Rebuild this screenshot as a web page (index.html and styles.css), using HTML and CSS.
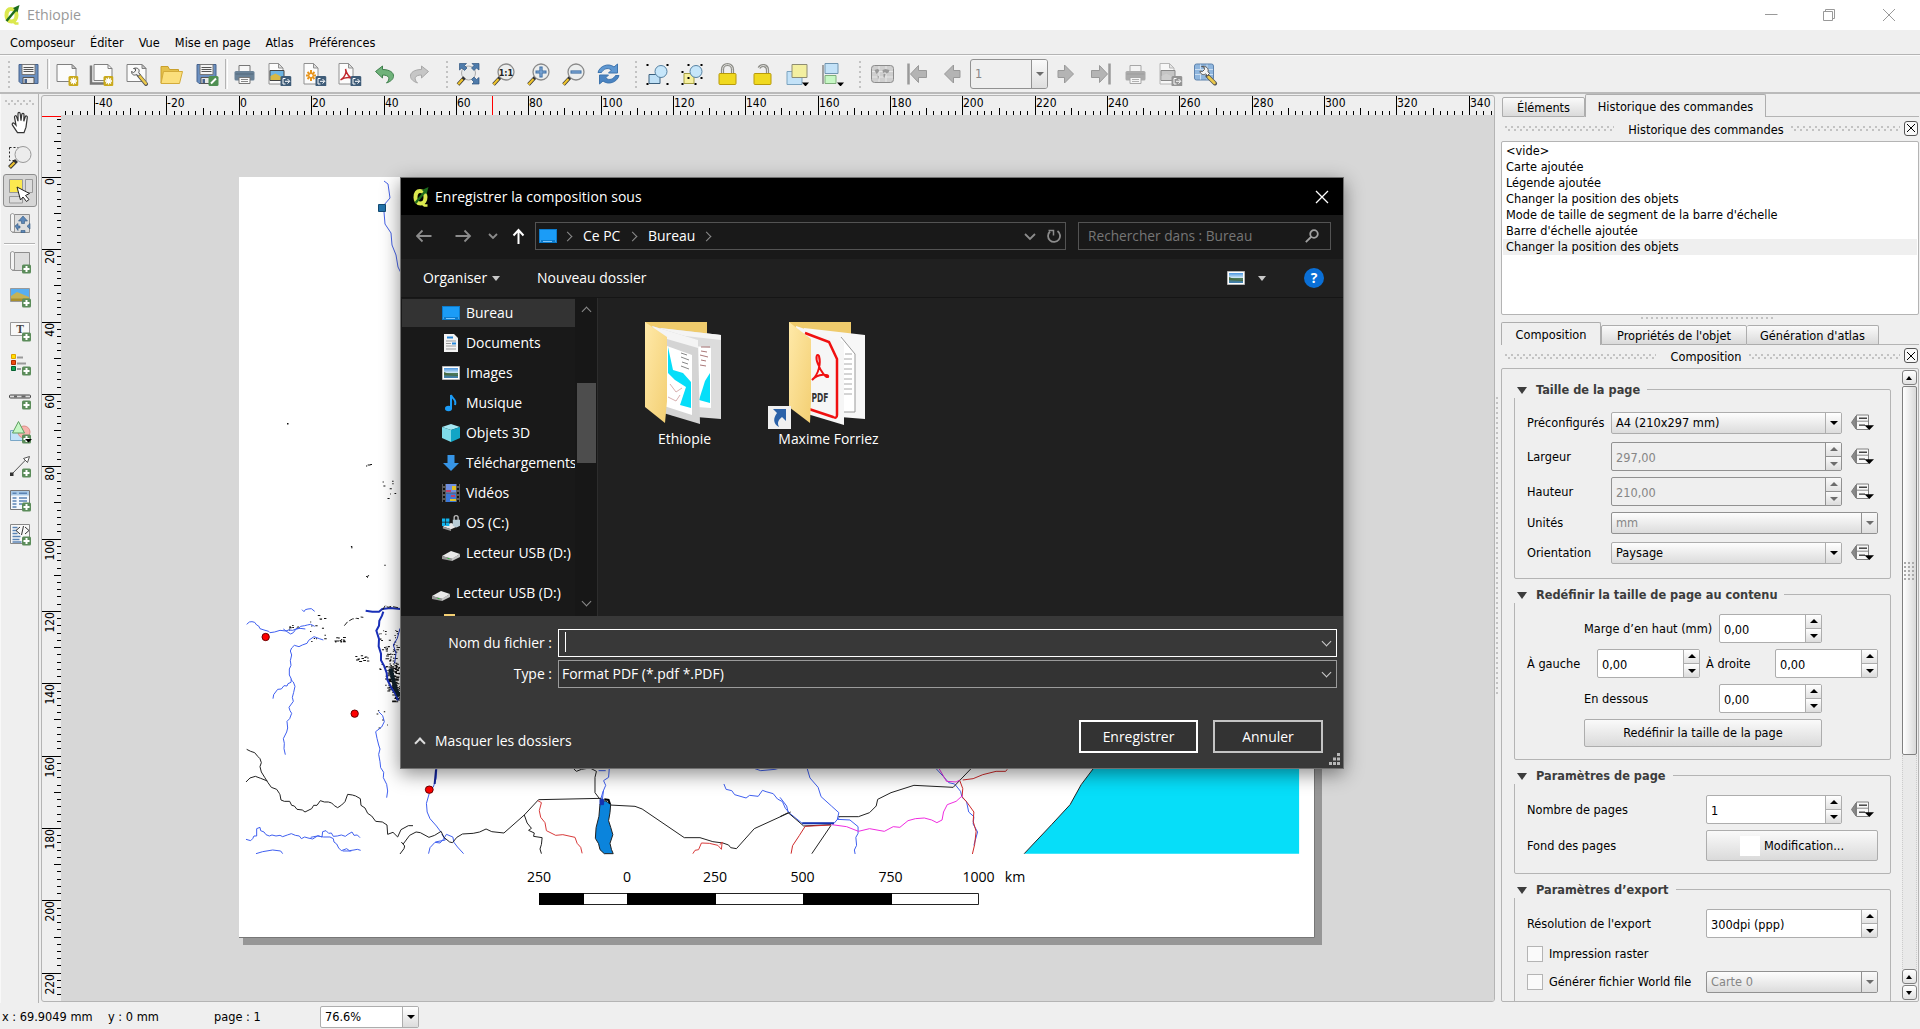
FILE: index.html
```html
<!DOCTYPE html>
<html lang="fr">
<head>
<meta charset="utf-8">
<title>Ethiopie</title>
<link rel="stylesheet" href="styles.css">
</head>
<body>
<svg class="defs" width="0" height="0">
  <defs>
    <linearGradient id="gold" x1="0" y1="0" x2="1" y2="1"><stop offset="0" stop-color="#ffe9a8"/><stop offset="1" stop-color="#f3cf73"/></linearGradient>
    <linearGradient id="sky" x1="0" y1="0" x2="0" y2="1"><stop offset="0" stop-color="#4a96e0"/><stop offset=".5" stop-color="#d8ecf8"/><stop offset=".55" stop-color="#4d7a58"/><stop offset="1" stop-color="#3f7fb8"/></linearGradient>
    <symbol id="i-disk" viewBox="0 0 24 24"><path d="M2.500 2.500h19v19h-17l-2-2z" fill="#6a8fc0" stroke="#46628c"/><path d="M5.500 2.500h13v10h-13z" fill="#f4f4f4" stroke="#777"/><path d="M7 5.500h10M7 7.500h10M7 9.500h10" stroke="#555"/><path d="M6.500 15.500h11v6h-11z" fill="#e8e8e8" stroke="#555"/><path d="M8 17h2.500v4H8z" fill="#46628c"/></symbol>
    <symbol id="i-page" viewBox="0 0 24 24"><path d="M2.500 2.500h15l4 4v13h-19z" fill="#fbfbfb" stroke="#808080"/><path d="M17.500 2.500v4h4z" fill="#ccc" stroke="#808080"/></symbol>
    <symbol id="b-star" viewBox="0 0 24 24"><rect x="14" y="14" width="10" height="10" rx="1.500" fill="#c9a91c"/><path d="M19 15.500v7M15.500 19h7M16.500 16.500l5 5M21.500 16.500l-5 5" stroke="#fff" stroke-width="1.300"/></symbol>
    <symbol id="b-exp" viewBox="0 0 24 24"><rect x="13" y="14" width="11" height="10.500" rx="1.500" fill="#3f5c78"/><path d="M18 16.500h-2.500v5.500H18M17.500 19.300h4.500M20 17l2.300 2.300L20 21.600" stroke="#fff" fill="none"/></symbol>
    <symbol id="b-plus" viewBox="0 0 24 24"><rect x="14" y="14.500" width="9" height="9" rx="1.500" fill="#5b8c5a"/><path d="M18.500 16v6M15.500 19h6" stroke="#fff" stroke-width="2"/></symbol>
    <symbol id="i-new" viewBox="0 0 24 24"><use href="#i-page"/><use href="#b-star"/></symbol>
    <symbol id="i-dup" viewBox="0 0 24 24"><path d="M1.500 3.500v18h18" fill="none" stroke="#777" stroke-width="2.500"/><path d="M4.500 2.500h14l4 4v12h-18z" fill="#fbfbfb" stroke="#808080"/><path d="M18.500 2.500v4h4" fill="none" stroke="#808080"/><use href="#b-star"/></symbol>
    <symbol id="i-wrench" viewBox="0 0 24 24"><use href="#i-page"/><path d="M14 13l7.500 9" stroke="#555" stroke-width="4" stroke-linecap="round"/><path d="M15 14l6.300 7.500" stroke="#ecc94a" stroke-width="2.500" stroke-linecap="round"/><path d="M9 6.500l2 .5v2l-2 1.500-2-1c0 3 2.500 4.500 5 3l2 1.500 1.500-1.500-1.300-2c1.500-3-1-5.500-5.200-4z" fill="#f2f2f2" stroke="#555"/></symbol>
    <symbol id="i-open" viewBox="0 0 24 24"><path d="M1.500 21V4.500h7l1.500 3h9v3.500" fill="#e5c14b" stroke="#c9a02c"/><path d="M1.500 21.500l2.500-12h19l-3 12z" fill="#fbdf7c" stroke="#d3ab3a"/></symbol>
    <symbol id="i-diskedit" viewBox="0 0 24 24"><use href="#i-disk"/><rect x="14" y="14" width="10" height="10" rx="1.500" fill="#4f8f52"/><path d="M16.500 21.500l5-5" stroke="#fff" stroke-width="2"/></symbol>
    <symbol id="i-print" viewBox="0 0 24 24"><path d="M6.500 3.500h11v7h-11z" fill="#f6f6f6" stroke="#777"/><rect x="2" y="9" width="20" height="9.500" rx="1.500" fill="#6a8297"/><path d="M3 12h18" stroke="#52687c"/><path d="M6.500 15.500h11v6h-11z" fill="#fafafa" stroke="#777"/><path d="M8.500 17.500h7M8.500 19.500h7" stroke="#888"/></symbol>
    <symbol id="i-doc" viewBox="0 0 24 24"><path d="M1.500 1.500h9.500l4.500 4.500v16h-14z" fill="#fcfcfc" stroke="#909090"/><path d="M11 1.500v4.500h4.500z" fill="#ddd" stroke="#909090"/></symbol>
    <symbol id="i-eimg" viewBox="0 0 24 24"><use href="#i-doc"/><path d="M2.500 8.500h14v10h-14z" fill="#6db4e2" stroke="#444"/><path d="M3 14l5-2.500 8 4.500v2H3z" fill="#d8b945"/><use href="#b-exp"/></symbol>
    <symbol id="i-esvg" viewBox="0 0 24 24"><use href="#i-doc"/><path d="M8.500 8v11M3.500 13.500h10M5 10l7 7M12 10l-7 7" stroke="#e8951d" stroke-width="2"/><circle cx="8.500" cy="13.500" r="1.500" fill="#fff"/><use href="#b-exp"/></symbol>
    <symbol id="i-epdf" viewBox="0 0 24 24"><use href="#i-doc"/><path d="M3 18c5-3 6-8 5-11 1 4 2 7 6 9-4-1-8 0-11 2z" fill="none" stroke="#c1272d" stroke-width="1.400"/><use href="#b-exp"/></symbol>
    <symbol id="i-undo" viewBox="0 0 24 24"><path d="M3 9.500L10 4v3.500c7 0 11.500 3 11 7-.3 3-3 5-7 6.500 4-4 3-8-4-8V16z" fill="#6fb27a" stroke="#3f7f4c"/></symbol>
    <symbol id="i-redo" viewBox="0 0 24 24"><path d="M21 9.500L14 4v3.500c-7 0-11.500 3-11 7 .3 3 3 5 7 6.500-4-4-3-8 4-8V16z" fill="#c6c6c6" stroke="#a8a8a8"/></symbol>
    <symbol id="i-full" viewBox="0 0 24 24"><circle cx="12" cy="11" r="7" fill="#e8eaea" stroke="#aaa"/><path d="M1.500 22.500l6.500-7" stroke="#333" stroke-width="3.500"/><path d="M1.700 22.300l4.500-5" stroke="#eec32e" stroke-width="2.200"/><path d="M3 1.500h7L8 3.500l2.500 2.500L8 8.500 5.500 6l-2.500 2zM22.500 1.500h-7l2 2-2.500 2.500L17.500 8.500 20 6l2.500 2zM22.500 22h-7l2-2-2.500-2.500 2.500-2.500 2.500 2.500 2.500-2z" fill="#4f7cab" stroke="#2f557f" stroke-width=".7"/></symbol>
    <symbol id="i-mag" viewBox="0 0 24 24"><path d="M2 22.500l7-7.500" stroke="#333" stroke-width="3.500"/><path d="M2 22.500l5-5.500" stroke="#eec32e" stroke-width="2.200"/><circle cx="14.500" cy="10" r="8" fill="#eceeee" stroke="#8a8a8a" stroke-width="1.300"/></symbol>
    <symbol id="i-m11" viewBox="0 0 24 24"><use href="#i-mag"/><text x="14.500" y="13.500" font-size="9" font-weight="bold" text-anchor="middle" fill="#222">1:1</text></symbol>
    <symbol id="i-mp" viewBox="0 0 24 24"><use href="#i-mag"/><path d="M14.500 4.500v11M9 10h11" stroke="#3f6ea3" stroke-width="3.200"/><path d="M14.500 5.500v9M10 10h9" stroke="#83addb" stroke-width="1.200"/></symbol>
    <symbol id="i-mm" viewBox="0 0 24 24"><use href="#i-mag"/><path d="M9 10h11" stroke="#3f6ea3" stroke-width="3.200"/><path d="M10 10h9" stroke="#83addb" stroke-width="1.200"/></symbol>
    <symbol id="i-refresh" viewBox="0 0 24 24"><path d="M1.500 10.500C3 4 12 .5 17.500 5L21 2v9h-9l3-3c-4-3-8-1-10 2.500z" fill="#5f98d2" stroke="#3e74ad"/><path d="M22.500 13.500C21 20 12 23.500 6.500 19L3 22v-9h9l-3 3c4 3 8 1 10-2.500z" fill="#4a84c2" stroke="#3e74ad"/></symbol>
    <symbol id="i-group" viewBox="0 0 24 24"><path d="M3.500 12.500h11v9h-11z" fill="#bfe0f6" stroke="#3c617e"/><circle cx="15.500" cy="9.500" r="6" fill="#c6e6fa" stroke="#5682a3"/><path d="M1 2h2v2H1zM21 2h2v2h-2zM1 21h2v2H1zM21 21h2v2h-2z"/></symbol>
    <symbol id="i-ungroup" viewBox="0 0 24 24"><path d="M3.500 11.500h10v10h-10z" fill="#f6f09e" stroke="#a39d43"/><circle cx="15.500" cy="9.500" r="6" fill="#c6e6fa" stroke="#5682a3"/><path d="M7 2h2v2H7zM20 2h2v2h-2zM20 15h2v2h-2zM7 15h2v2H7zM1 9h2v2H1zM1 21h2v2H1zM14 21h2v2h-2z"/></symbol>
    <symbol id="i-lock" viewBox="0 0 24 24"><path d="M7 12V7.500a5 5 0 0 1 10 0V12" fill="none" stroke="#8d8d88" stroke-width="3.200"/><path d="M7 12V7.500a5 5 0 0 1 10 0V12" fill="none" stroke="#dcdcd8"/><rect x="3.500" y="11.500" width="17" height="11" rx="1" fill="#f0d91f" stroke="#b89a0a"/></symbol>
    <symbol id="i-unlock" viewBox="0 0 24 24"><path d="M8.500 6C11 2 17 3 17 8v4" fill="none" stroke="#8d8d88" stroke-width="3.200"/><path d="M8.500 6C11 2 17 3 17 8v4" fill="none" stroke="#dcdcd8"/><rect x="3.500" y="11.500" width="17" height="11" rx="1" fill="#f0d91f" stroke="#b89a0a"/></symbol>
    <symbol id="b-tri" viewBox="0 0 24 24"><path d="M16.500 20.500h7l-3.500 4z"/></symbol>
    <symbol id="i-raise" viewBox="0 0 24 24"><path d="M1.500 9.500h15v13h-15z" fill="#c3e2f8" stroke="#7ba3bf"/><path d="M6.500 2.500h15v13h-15z" fill="#f3efa0" stroke="#8e8c72"/><use href="#b-tri"/></symbol>
    <symbol id="i-align" viewBox="0 0 24 24"><path d="M2.500 3v19" stroke="#555"/><path d="M4.500 1.500h13v10h-13z" fill="#c3e2f8" stroke="#7095b0"/><path d="M4.500 13.500h11v8h-11z" fill="#c6f7c4" stroke="#7fae7c"/><use href="#b-tri"/></symbol>
    <symbol id="i-atlas" viewBox="0 0 24 24"><rect x="1" y="3.500" width="22" height="17" rx="3" fill="#cfcfcf" stroke="#8c8c8c"/><path d="M8.500 4v16M15.500 4v16M1.500 9.500h21M1.500 15h21" stroke="#eee" opacity=".8"/><path d="M4 8l3-1 2 1-1 2-2 2-1-2zM7 13.500l1.500 1-1 3zM12 8l3-1 4 1-1 2.500-2 1-1.500-1.500-2 1zM13 12h2l-1 4-1-1z" fill="#999"/></symbol>
    <symbol id="i-first" viewBox="0 0 24 24"><path d="M3 1.500v21" stroke="#9a9a9a" stroke-width="2.500"/><path d="M5 12l8-8.500V8.500h8v7h-8v5z" fill="#b4b4b4" stroke="#999"/></symbol>
    <symbol id="i-prev" viewBox="0 0 24 24"><path d="M4 12l9-9v5.500h6.500v7H13V21z" fill="#b4b4b4" stroke="#999"/></symbol>
    <symbol id="i-setatlas" viewBox="0 0 24 24"><rect x="1" y="2" width="19" height="16" rx="2" fill="#8fb6de" stroke="#5f83ad"/><path d="M1.500 7.500h18M1.500 12.500h18M7 2.500v15M13.500 2.500v15" stroke="#dbe9f6" opacity=".8"/><path d="M14 14l7.500 7.500" stroke="#555" stroke-width="4" stroke-linecap="round"/><path d="M15 15l6 6" stroke="#ecc94a" stroke-width="2.500" stroke-linecap="round"/><path d="M8 4.500l2.500.5.500 2.500L9 9.500 6.500 9c0 3 3 4.500 5.500 3l2 1.500 2-2-1.500-2c1-3-2-6-6.500-5z" fill="#f4f4f4" stroke="#555"/></symbol>
    <symbol id="t-hand" viewBox="0 0 24 24"><path d="M8.500 22.500l-5-7.500c-1-2 .5-3 2-1.500l1.500 1.500-1.500-8c-.2-1.800 1.800-2 2.200-.3L9 11V3.500c0-1.800 2-1.800 2.200 0L12 10.500l.8-6.300c.2-1.500 2.200-1.300 2.200.2l-.2 6.600 1.500-4.500c.5-1.300 2.300-.8 2 .7L17 17l-2 5.500z" fill="#fff" stroke="#333" stroke-width="1.200" transform="translate(1 -.8)"/></symbol>
    <symbol id="t-zoom" viewBox="0 0 24 24"><path d="M1.500 2.500h9M1.500 2.500v13h6" fill="none" stroke="#222" stroke-dasharray="2 2"/><path d="M1.500 22.500l7-7" stroke="#333" stroke-width="4"/><path d="M2 22l4.500-4.500" stroke="#eec32e" stroke-width="2.200"/><circle cx="15" cy="9.500" r="8" fill="#ececec" stroke="#999"/></symbol>
    <symbol id="t-select" viewBox="0 0 26 26"><path d="M2.500 1.500h13v13h-13z" fill="#fce94f" stroke="#999"/><path d="M18.500 1.500h7v13h-7zM2.500 18.500h13v6.500h-13z" fill="#dcdcdc" stroke="#999"/><path d="M10 9l3.500 13 2.500-3 3.500 4.500 2.500-2-3.500-4 4-2z" fill="#fff" stroke="#222"/></symbol>
    <symbol id="t-map" viewBox="0 0 24 24"><path d="M4.500 2.500h17v18h-17z" fill="#dedede" stroke="#8e8e8e"/><path d="M2.500 2.500q2-2 4 0V20h-2.500q-2-1-1.500-3z" fill="#f3f3f3" stroke="#999"/></symbol>
    <symbol id="t-move" viewBox="0 0 24 24"><use href="#t-map"/><path d="M15 4l4.500 5h-3v2.500h-3V9h-3zM7 14l3-2.500V14h2v2h-2v2.500zM22 11.500v5.500l-3-2.700zM13 18.500h4v2h-4z" fill="#5c87b8" stroke="#34597f" stroke-width=".6"/></symbol>
    <symbol id="t-addmap" viewBox="0 0 24 24"><use href="#t-map"/><use href="#b-plus"/></symbol>
    <symbol id="t-img" viewBox="0 0 24 24"><path d="M2.500 4.500h19v13h-19z" fill="#58aef0" stroke="#999"/><path d="M3 12l6-4 12 5v4H3z" fill="#c5b255"/><path d="M3 14.500h18V17H3z" fill="#a88f30"/><use href="#b-plus"/></symbol>
    <symbol id="t-text" viewBox="0 0 24 24"><path d="M2.500 4.500h19v13h-19z" fill="#f8f8f8" stroke="#999"/><text class="serif" x="12" y="15" font-size="11.500" font-weight="bold" text-anchor="middle" fill="#444">T</text><use href="#b-plus"/></symbol>
    <symbol id="t-legend" viewBox="0 0 24 24"><path d="M3.500 2.500h4v4h-4z" fill="#ffe000" stroke="#e0a000"/><path d="M3.500 8.500h4v4h-4z" fill="#f04a10" stroke="#b02c00"/><path d="M3.500 14.500h4v4h-4z" fill="#10a050" stroke="#056030"/><path d="M9 5.500h6M9 11.500h9M9 17h4" stroke="#999" stroke-width="1.800"/><use href="#b-plus"/></symbol>
    <symbol id="t-scale" viewBox="0 0 24 24"><rect x="1.500" y="9" width="21" height="3" rx="1" fill="#ddd" stroke="#444"/><path d="M6 10.500h3M13.500 10.500h4" stroke="#666" stroke-width="2"/><use href="#b-plus"/></symbol>
    <symbol id="t-shape" viewBox="0 0 24 24"><path d="M2.500 10.500h12v10h-12z" fill="#c3e2f8" stroke="#7aa7c7"/><circle cx="16" cy="12" r="6" fill="#f7b3ae" stroke="#dd8c86"/><path d="M10.500 1.500l6 11.500h-12z" fill="#c6f7c4" stroke="#5e9f60"/><use href="#b-plus"/><path d="M17 19h7l-3.500 3.500z"/></symbol>
    <symbol id="t-arrow" viewBox="0 0 24 24"><path d="M3.500 20.500L19 4.500" stroke="#555"/><path d="M2 18.500h3.500V22H2z" fill="#333"/><path d="M21.500 2.500l-6 2 4 4z" fill="#fff" stroke="#555"/><use href="#b-plus"/></symbol>
    <symbol id="t-table" viewBox="0 0 24 24"><path d="M2.500 2.500h19v19h-19z" fill="#f4f8fc" stroke="#777"/><path d="M3 3h18v4.500H3z" fill="#a9c9e6"/><path d="M4.500 5.200h4M11 5.200h8M4.500 10h4M11 10h8M4.500 13h4M11 13h8M4.500 16h4M11 16h3M4.500 19h4" stroke="#5a83b4" stroke-width="1.400"/><use href="#b-plus"/></symbol>
    <symbol id="t-html" viewBox="0 0 24 24"><path d="M2.500 2.500h19v19h-19z" fill="#f8f8f8" stroke="#888"/><path d="M4.500 5.500h5M4.500 8.500h4M4.500 11.500h5M4.500 14.500h8M4.500 17.500h7M4.500 20h9" stroke="#5a83b4" stroke-width="1.600"/><path d="M12 5l-4 3.500 4 3.500M15.500 4l-2 9M17 5l4 3.500-4 3.500" fill="none" stroke="#333"/><use href="#b-plus"/></symbol>
    <symbol id="i-prop" viewBox="0 0 23 18"><path d="M5 2v13L.5 8.500z" fill="#8a8a8a" stroke="#777"/><path d="M5.500 1h12v14.500h-12z" fill="#f8f8f8" stroke="#808080"/><path d="M8 4.200h8" stroke="#444" stroke-width="1.500"/><path d="M6 7.200h11" stroke="#888"/><path d="M8 11.200h6" stroke="#333" stroke-width="1.300"/><path d="M13.500 11.300H23l-4.700 4.700z"/></symbol>
    <symbol id="q" viewBox="0 0 18 20"><path d="M7 4C3.500 4 2.500 7.500 2.500 10.500S4 16.500 7.500 16.500 12.500 13 12.500 10 11 4 7 4z" fill="none" stroke="#dbe84e" stroke-width="4"/><path d="M8 15.500l3.500 3h3" stroke="#dbe84e" stroke-width="2.500" fill="none"/><path d="M2.500 16L12.500 4" stroke="#1d6b1d" stroke-width="2.400"/><path d="M15.500 0l-2 7.500L9 3z" fill="#1d6b1d"/></symbol>
    <symbol id="d-desk" viewBox="0 0 18 14"><path d="M0 0h18v14H0z" fill="#0c7ccd"/><path d="M1 1h16v10H1z" fill="#1b9cf7"/><path d="M1 12h1M4 12.500h9M16 12h1" stroke="#7cc4fb"/></symbol>
    <symbol id="d-pic" viewBox="0 0 18 14"><path d="M.5.500h17v13H.5z" fill="#fff" stroke="#b5b5b5"/><path d="M2 2h14v10H2z" fill="url(#sky)"/><path d="M2 6l5 2 9 1v1L2 9z" fill="#4a6b43"/></symbol>
    <symbol id="d-usb" viewBox="0 0 18 11"><path d="M0 6L9 1l9 3-8 5z" fill="#e8e8e8"/><path d="M0 6l10 2.500V11L0 9z" fill="#999"/><path d="M10 8.500l8-4.500v3l-8 4z" fill="#c4c4c4"/><path d="M5.500 8.500h2" stroke="#2fbd3a"/></symbol>
  </defs>
</svg>

<header class="titlebar">
  <svg width="18" height="20"><use href="#q"/></svg><span>Ethiopie</span>
  <svg class="winctl" width="132" height="14" viewBox="0 0 132 14" fill="none" stroke="#999"><path d="M0 6.500h12.500M58.500 3.500h9v9h-9zM60.500 3.500v-2h9v9h-2M118 1l12 12M130 1l-12 12"/></svg>
</header>
<nav class="menubar"><span>Composeur</span><span>Éditer</span><span>Vue</span><span>Mise en page</span><span>Atlas</span><span>Préférences</span></nav>

<div class="toolbar">
  <i class="grip first"></i>
  <svg><use href="#i-disk"/></svg><i class="sep"></i>
  <svg><use href="#i-new"/></svg><svg><use href="#i-dup"/></svg><svg><use href="#i-wrench"/></svg><svg><use href="#i-open"/></svg><svg><use href="#i-diskedit"/></svg><i class="sep"></i>
  <svg><use href="#i-print"/></svg><svg><use href="#i-eimg"/></svg><svg><use href="#i-esvg"/></svg><svg><use href="#i-epdf"/></svg><svg><use href="#i-undo"/></svg><svg><use href="#i-redo"/></svg>
  <i class="grip"></i>
  <svg><use href="#i-full"/></svg><svg><use href="#i-m11"/></svg><svg><use href="#i-mp"/></svg><svg><use href="#i-mm"/></svg><svg><use href="#i-refresh"/></svg>
  <i class="grip"></i>
  <svg><use href="#i-group"/></svg><svg><use href="#i-ungroup"/></svg><svg><use href="#i-lock"/></svg><svg><use href="#i-unlock"/></svg><svg><use href="#i-raise"/></svg><svg><use href="#i-align"/></svg>
  <i class="grip"></i>
  <svg><use href="#i-atlas"/></svg><svg><use href="#i-first"/></svg><svg><use href="#i-prev"/></svg>
  <div class="field off atlasnum"><span>1</span><b class="dd"></b></div>
  <svg class="flip"><use href="#i-prev"/></svg><svg class="flip"><use href="#i-first"/></svg>
  <svg class="gray"><use href="#i-print"/></svg><svg class="gray"><use href="#i-eimg"/></svg><svg><use href="#i-setatlas"/></svg>
</div>

<main>
  <aside class="tools">
    <i class="dots"></i>
    <svg><use href="#t-hand"/></svg><svg><use href="#t-zoom"/></svg><div class="on"><svg><use href="#t-select"/></svg></div><svg><use href="#t-move"/></svg>
    <hr>
    <svg><use href="#t-addmap"/></svg><svg><use href="#t-img"/></svg><svg><use href="#t-text"/></svg><svg><use href="#t-legend"/></svg><svg><use href="#t-scale"/></svg><svg><use href="#t-shape"/></svg><svg><use href="#t-arrow"/></svg><svg><use href="#t-table"/></svg><svg><use href="#t-html"/></svg>
  </aside>

  <section class="composer">
    <svg class="ruler-h" id="rulerH" viewBox="42 96 1452 19"></svg>
    <svg class="ruler-v" id="rulerV" viewBox="42 115 19 886"></svg>
    <svg class="canvas" viewBox="61 115 1433 886" fill="none">
      <path d="M243 181h1079v764H243z" fill="#969696"/>
      <path d="M239 177h1075.500v760.500H239z" fill="#fff"/>
      <path d="M239 937.500h1075.500V177" stroke="#777"/>
      <g id="specks" fill="#111"></g>
      <path d="M384 181l4 3 2 14-6 7M384 212l1 12 6 9 1 12 4 10 2 12 3 6" stroke="#4763e8"/>
      <path d="M378.500 204.500h7v7h-7z" fill="#2273ab" stroke="#134a72"/>
      <g class="map" transform="translate(0 560) scale(.33333)">
        <g stroke="#4060f0">
          <path d="M740 193l8-7 8-1 8 2 6 8 6 3 4 8 12 4 14 4 4 4 14-2 16-5 18 2 8-3 12 1 10-4 8-2 6-6 12-2 8-2 10-2 12 6M850 207l14 10 8 5 8-4 8-11 12-2 16 2M906 149l6 6 4-6 8-2 10-1 10 8M970 240l-12-4-16-6-16 11-5 9-14 5-10 5-14-4-8 8-4 9 4 12-4 17 2 14-5 11v18l6 12-1 10-9 4-3 7-9-1-8 10-11 1-12 16-2 12M872 358l8 8 5 13-4 18-4 15 3 12-13 18 3 10 5 8-6 16-8 8 2 20-3 12-10 20 3 14-1 16 4 18"/>
          <path d="M1136 455l12 12 5 18-8 16-18 14 4 20 5 20 4 12-4 16 4 22 2 18 9 14-1 16 10 20 3 20-3 20"/>
          <path d="M738 838l14 4 6-6 4-8 8 0 0-22 10-4 2 10 10 4 6 8 10 4 8-3 12 3 12-2 8 4 14-5 12-4 12 5 12 2 6 8 10-5 10 3 14 3 16-10 12 4 2-16 10-3 8 8 8-1 6 10 12-1 12-3 12 4 8-6 12-7 6 10 10-1 8 8M932 832l20-4 18 3 20 0 10 5 2 10 8 6 6 12 8 8 16-6 8 6 14-2 10-2 10 3M1028 873h26M768 881l20-6 30-5 24 3 6 8"/>
        </g>
        <g stroke="#1a30b8" stroke-width="2"><path d="M1097 152l20 3 20 0 10-8 24-3 30 3M1150 155l-4 12-8 15-1 15-8 15 8 25-1 22 7 22v20l10 18 7 20 2 20 12 24 12 18 8 20"/></g>
        <path d="M1200 205l-8 30-12 20 8 25-4 30" stroke="#1a30b8"/>
        <g stroke="#222">
          <path d="M740 568l12 6 12 4 10 12 6 6 4 12-4 12 4 16 10 16 10 16 10 14 16 6 8 12 2 4 3 16 10 4 16 0 6 12 8 2 8 10 16 2 8 6 20-10 6-10 10 0 10-14 12 4 12 0 10 3 8 8 10 6 12-8 10-10 8-22 14 2 10 3 14 8 2 20 12 8 8 16 12 8 12 16 20 2 14 9 2 28 16-6 14 14 10-22 22-12 14 0M738 666l12-12 16-5 16 6 20 8M1204 846l10 12-2 8-12 16"/>
        </g>
        <path d="M1033 197l10-12 14-8 12-2 8 1M1082 171l8 1M1148 150l8-14 8 6 10-3 20 4" stroke="#222" stroke-dasharray="5 2"/>
        <path d="M1172 325l6 28 8 32 12 24" stroke="#10202a" stroke-width="4"/>
        <circle cx="797" cy="231" r="11" fill="#f00" stroke="#6a0000"/><circle cx="1064" cy="461" r="11" fill="#f00" stroke="#6a0000"/>
      </g>
      <g class="map" transform="translate(230 740) scale(.35714 .33333)">
        <path d="M579 86l-2 30-8 26M558 160l-8 30 2 26 8 20 18 22 14 20M556 341l4-18 14-16 14 2 10-12 8-14 18 8 3 16 10 14 17 20M593 282l10 18-28 6M1032 92h20M1046 150l-4 34M1062 86l-2 26-14 10 6 14-8 20-6 22M1470 86l16 6 40-4 14-4M1383 132l6 16 16 4 8 12 32 10 10-8 24 3 12-18 10 4 20 6 12 16 14 8 8 20 10 12" stroke="#4060f0"/>
        <path d="M577 88l-4 44" stroke="#15259a" stroke-width="2"/>
        <path d="M485 312l18-26 18-10 12 2 24 14 16-6 18-12 8 18 16 14 8 2 12-16 16-10 30-2 18-4 18-9 16 8 34 4L824 225l40-46 176-4M962 86l8 8 14-6 24-4 18 10-4 18v46l14 20M1062 195l72 4 20 8 118 86h44l36 12 28 4 16 6 6 8 16 3L1468 266l102-50M824 225l8 24 12 16-8 6 16 8-2 10 24 4-2 20-4 14 4 14" stroke="#222"/>
        <path d="M862 182l10 6-6 24 4 20 12 16 4 24 26 14 20-2 34 8 6 18 10 12 4 18M1296 341l6-10 10-2 8-20 22 1 24 6 10 12 2-22-6 8" stroke="#d83a3a"/>
        <path d="M1036 192l14-10 16 10-2 26-4 24 6 20 6 22-8 26 4 18 5 13h-25l-12-12-4-18-9-16 2-32 8-34z" fill="#0b84dc" stroke="#222"/>
        <path d="M1036 178h10v16h-10z" fill="#1533b0" stroke="#1533b0"/>
        <path d="M1048 178l12 2 4 12" stroke="#000" stroke-width="2"/>
        <circle cx="558" cy="149" r="11" fill="#f00" stroke="#6a0000"/>
      </g>
      <g class="map" transform="translate(780 600) scale(.37 .33333)">
        <path d="M848 504l-34 50-30 60-50 60-74 87h743V504z" fill="#06def9"/>
        <path d="M848 504l-34 50-30 60-50 60-74 87" stroke="#222"/>
        <path d="M73 504l8 30 22 28 8 28 28 28 20 20-4 20 34 2 22 20 0 20-6 12 2 24-6 14 2 12M0 592l18 26 4 18 38 34M422 506l20 24 14 18 16 4 16 22 4 18 12 12 6 32 14 14-2 22 12 24-10 40M60 670h86l14-18" stroke="#4060f0"/>
        <path d="M0 650l22-12 42 40 74-4M138 676l-52 85M158 650h54l30-12 18-20 4-20 36-20 62-22 106 6 50-58" stroke="#222"/>
        <path d="M30 761l4-24 18-30 16-28 70-4M494 540l14-2 14-2 26-12 36-10h26l4-6M486 542l8 24-2 24 14 18 18 28-2 28 8 30-4 40-6 28" stroke="#cf2a2a"/>
        <path d="M140 674l40 6 32 14 30-8 40 8 24-14 18 2 22-20 20-6 24-2 20 6 14 8 14-8 4-24 10-22 24-10 18-18M430 506l20 38 26 2 10-6" stroke="#f02ce0"/>
        <path d="M60 670h86" stroke="#1533b0" stroke-width="2"/>
      </g>
      <path d="M539.500 893.500h439v11h-439z" fill="#fff" stroke="#222"/>
      <path d="M539 893h45v12h-45zM627 893h89v12h-89zM803 893h89v12h-89z" fill="#000"/>
      <g class="scale-txt"><text x="539" y="882">250</text><text x="627" y="882">0</text><text x="715" y="882">250</text><text x="802.500" y="882">500</text><text x="890.500" y="882">750</text><text x="978.500" y="882">1000</text><text x="1015" y="882">km</text></g>
    </svg>
  </section>

  <i class="vsplit"></i>

  <aside class="docks">
    <div class="tabs top"><span class="t1">Éléments</span><span class="act t2">Historique des commandes</span><i></i></div>
    <div class="dockhead"><i class="dots"></i><span>Historique des commandes</span><i class="dots"></i><b class="x"></b></div>
    <ul class="history"><li>&lt;vide&gt;</li><li>Carte ajoutée</li><li>Légende ajoutée</li><li>Changer la position des objets</li><li>Mode de taille de segment de la barre d'échelle</li><li>Barre d'échelle ajoutée</li><li class="cur">Changer la position des objets</li></ul>
    <i class="hsplit"></i>
    <div class="tabs bottom"><span class="act t3">Composition</span><span class="t4">Propriétés de l'objet</span><span class="t5">Génération d'atlas</span><i></i></div>
    <div class="dockhead second"><i class="dots"></i><span>Composition</span><i class="dots"></i><b class="x"></b></div>
    <div class="scroller">
      <div class="props">
        <fieldset class="g1"><legend>Taille de la page</legend>
          <div class="row"><label>Préconfigurés</label><div class="field btn w231"><span>A4 (210x297 mm)</span><b class="dd"></b></div><svg class="prop"><use href="#i-prop"/></svg></div>
          <div class="row mt8"><label>Largeur</label><div class="field spin off w231"><span>297,00</span><b class="ud"></b></div><svg class="prop"><use href="#i-prop"/></svg></div>
          <div class="row mt6"><label>Hauteur</label><div class="field spin off w231"><span>210,00</span><b class="ud"></b></div><svg class="prop"><use href="#i-prop"/></svg></div>
          <div class="row mt6"><label>Unités</label><div class="field btn off w267"><span>mm</span><b class="dd"></b></div></div>
          <div class="row mt8"><label>Orientation</label><div class="field btn w231"><span>Paysage</span><b class="dd"></b></div><svg class="prop"><use href="#i-prop"/></svg></div>
        </fieldset>
        <fieldset class="g2"><legend>Redéfinir la taille de page au contenu</legend>
          <div class="row in"><label class="w135">Marge d’en haut (mm)</label><div class="field spin w103"><span>0,00</span><b class="ud"></b></div></div>
          <div class="row mt6"><label class="w70">À gauche</label><div class="field spin w103"><span>0,00</span><b class="ud"></b></div><label class="w75">À droite</label><div class="field spin w103"><span>0,00</span><b class="ud"></b></div></div>
          <div class="row in mt6"><label class="w135">En dessous</label><div class="field spin w103"><span>0,00</span><b class="ud"></b></div></div>
          <div class="row in mt6"><div class="push redef">Redéfinir la taille de la page</div></div>
        </fieldset>
        <fieldset class="g3"><legend>Paramètres de page</legend>
          <div class="row"><label class="w179">Nombre de pages</label><div class="field spin w136"><span>1</span><b class="ud"></b></div><svg class="prop"><use href="#i-prop"/></svg></div>
          <div class="row mt6"><label class="w179">Fond des pages</label><div class="push modif"><i></i>Modification...</div></div>
        </fieldset>
        <fieldset class="g4"><legend>Paramètres d’export</legend>
          <div class="row"><label class="w179">Résolution de l'export</label><div class="field spin w172"><span>300dpi (ppp)</span><b class="ud"></b></div></div>
          <div class="row mt8"><i class="chk"></i><label>Impression raster</label></div>
          <div class="row mt9"><i class="chk"></i><label class="w157">Générer fichier World file</label><div class="field btn off w172"><span>Carte 0</span><b class="dd"></b></div></div>
        </fieldset>
      </div>
      <div class="sbar"><b class="up"></b><div class="thumb"></div><div class="track"></div><b class="up"></b><b class="down"></b></div>
    </div>
  </aside>
</main>

<footer class="status"><span class="sx">x : 69.9049 mm</span><span class="sy">y : 0 mm</span><span class="sp">page : 1</span><div class="field zoom"><span>76.6%</span><b class="dd"></b></div></footer>

<div class="dialog">
  <div class="dtitle"><svg width="18" height="20"><use href="#q"/></svg><span>Enregistrer la composition sous</span><svg class="close" width="14" height="14" viewBox="0 0 14 14" stroke="#fff" stroke-width="1.300"><path d="M1 1l12 12M13 1L1 13"/></svg></div>
  <div class="dnav">
    <svg width="118" height="18" viewBox="0 0 118 18" fill="none" stroke="#8c8c8c" stroke-width="1.800"><path d="M15.500 9H1M6.500 3.500L1 9l5.500 5.500M39.500 9H54M48.500 3.500L54 9l-5.500 5.500M73 7l4 4 4-4"/><path d="M102.500 17V3M97.500 8.500l5-5.500 5 5.500" stroke="#fff" stroke-width="2"/></svg>
    <div class="addr"><svg width="18" height="14"><use href="#d-desk"/></svg><i class="chev"></i><span class="pc">Ce PC</span><i class="chev"></i><span class="bur">Bureau</span><i class="chev"></i>
      <svg class="addr-end" width="37" height="16" viewBox="0 0 37 16" fill="none" stroke="#8c8c8c" stroke-width="1.800"><path d="M1 6l5 5 5-5"/><path d="M26 3.500a6 6 0 1 0 7.500-.5" /><path d="M24.500 2.500h5v5" stroke-width="1.500"/></svg></div>
    <div class="search"><span>Rechercher dans : Bureau</span><svg width="14" height="14" viewBox="0 0 14 14" fill="none" stroke="#a0a0a0" stroke-width="1.800"><circle cx="9" cy="5" r="3.800"/><path d="M6.500 7.500L.8 13.200"/></svg></div>
  </div>
  <div class="dcmd"><span>Organiser</span><i class="tri"></i><span class="new">Nouveau dossier</span><svg class="view" width="18" height="14"><use href="#d-pic"/></svg><i class="tri v"></i><span class="help">?</span></div>
  <div class="dbody">
    <div class="tree">
      <div class="sel"><svg width="18" height="14"><use href="#d-desk"/></svg>Bureau</div>
      <div><svg width="18" height="18" viewBox="0 0 18 18"><path d="M2 0h10l4 4v14H2z" fill="#f4f4f4"/><path d="M4 7h10M4 9.500h5M4 12h10M4 15h10" stroke="#999"/><path d="M5 3.500h6M10 9.500h4" stroke="#2586d8" stroke-width="2"/></svg>Documents</div>
      <div><svg width="18" height="14"><use href="#d-pic"/></svg>Images</div>
      <div><svg width="18" height="18" viewBox="0 0 18 18"><ellipse cx="6.500" cy="14.500" rx="3.500" ry="2.800" fill="#1b9cf7"/><path d="M9 15V1c1 4 6 4 4 10" fill="none" stroke="#1b9cf7" stroke-width="2"/></svg>Musique</div>
      <div><svg width="18" height="18" viewBox="0 0 18 18"><path d="M0 3l9-3 9 3-9 3z" fill="#a5e7f2"/><path d="M0 3l9 3v12l-9-4z" fill="#7fdbe9"/><path d="M18 3L9 6v12l9-4z" fill="#12a5c6"/></svg>Objets 3D</div>
      <div class="dl"><svg width="18" height="18" viewBox="0 0 18 18"><path d="M5.500 1h7v8H17l-8 8-8-8h4.500z" fill="#3795e6"/></svg>Téléchargements</div>
      <div><svg width="18" height="18" viewBox="0 0 18 18"><path d="M0 0h18v18H0z" fill="#5a5a5a"/><path d="M4 0h10v8.500H4z" fill="#6f8fe0"/><path d="M4 9.500h10V18H4z" fill="#3b78d8"/><path d="M10 2h4v4h-4zM8 15h6v2H8z" fill="#e2c026"/><path d="M4 6h5v2H4zM9 11h4v2H9z" fill="#c04068"/><path d="M2 0v18M16 0v18" stroke="#111" stroke-width="2" stroke-dasharray="2 2"/></svg>Vidéos</div>
      <div><svg width="20" height="18" viewBox="0 0 20 18"><path d="M1 13l9-4 9 3-9 4z" fill="#e8e8e8"/><path d="M1 13l9 3v2l-9-3z" fill="#999"/><path d="M0 4h3.700v3.700H0zM4.500 4h3.700v3.700H4.500zM0 8.500h3.700v3.700H0zM4.500 8.500h3.700v3.700H4.500z" fill="#10b4ee"/><path d="M13.500 6V3a2.200 2.200 0 0 1 4.400 0v3" fill="none" stroke="#bbb" stroke-width="1.500"/><path d="M12 5.500h8V12l-4 2-4-2z" fill="#b8ccd6"/></svg>OS (C:)</div>
      <div><svg class="low" width="18" height="11"><use href="#d-usb"/></svg>Lecteur USB (D:)</div>
      <div class="root"><svg class="low" width="18" height="11"><use href="#d-usb"/></svg>Lecteur USB (D:)</div>
      <div class="peek"></div>
    </div>
    <div class="tscroll"><i class="chev u"></i><div class="tthumb"></div><i class="chev d"></i></div>
    <div class="files">
      <figure><svg width="92" height="108" viewBox="0 0 92 108"><path d="M8 1h62v80H8z" fill="#efcb6c"/><path d="M23 7l61 7v84l-50-4z" fill="#dcdcdc"/><path d="M23 7l61 7v5L30 13z" fill="#f4f4f4"/><path d="M42 23l32 4v60l-14-1z" fill="#fff"/><path d="M73 52v30l-11-3 6-19z" fill="#06def9"/><path d="M64 26h9M64 30l6 1M63 34l8 2M64 39l5 1M63 44l6 1" stroke="#a77"/><path d="M15 5l46 14 2 84-40-12z" fill="#d4d4d4"/><path d="M15 5l46 14v8L23 16z" fill="#f4f4f4"/><path d="M30 25l25 9v60l-28-9z" fill="#fff"/><path d="M31 26l5 23 10 3 8 9v26l-11-3 6-18-11-7-7-7z" fill="#06def9"/><path d="M33 63l6 8 6-4M31 76l8 4 4-6" stroke="#d8b0b0" fill="none"/><path d="M44 32l6 2M44 36l8 3M45 41l6 2M44 45l8 3" stroke="#888" fill="none"/><path d="M8 1l22 15v64l-2 22L8 86z" fill="url(#gold)"/></svg><figcaption>Ethiopie</figcaption></figure>
      <figure><svg width="92" height="108" viewBox="0 0 92 108"><path d="M8 1h62v80H8z" fill="#efcb6c"/><path d="M23 7l61 7v84l-50-4z" fill="#f7f7f7"/><path d="M60 16l14 17v58H60" fill="#fff" stroke="#999"/><path d="M64 33h7M63 38h8M63 43h8M63 48h8M63 53h8M63 58h8M63 63h8M63 68h8M63 73h8" stroke="#aaa"/><path d="M15 5l48 16v83l-40-12z" fill="#f6f6f6"/><path d="M24 12l24 9 8 17v56q0 4-4 2L28 88" fill="none" stroke="#f01010" stroke-width="2.500"/><path d="M31 59c7-6 9-17 7-24-2-3-4 1-1 8 3 8 8 14 10 13 2-3-10-4-16 3z" fill="none" stroke="#f01010" stroke-width="2"/><text x="39" y="81" font-size="13" font-weight="bold" text-anchor="middle" textLength="17" lengthAdjust="spacingAndGlyphs" fill="#333">PDF</text><path d="M8 1l22 17v62l-1 22L8 86z" fill="url(#gold)"/></svg><svg class="link" width="23" height="23" viewBox="0 0 23 23"><path d="M0 0h23v23H0z" fill="#f0f0f0"/><path d="M5 3h13v12l-4-4c-4 3-5 6-3 10-6-3-6-9-2-14z" fill="#2b62a9"/></svg><figcaption>Maxime Forriez</figcaption></figure>
    </div>
  </div>
  <div class="dfoot">
    <div class="line"><label>Nom du fichier :</label><div class="inp focus"><i class="caret"></i><i class="chev s"></i></div></div>
    <div class="line"><label>Type :</label><div class="inp"><span>Format PDF (*.pdf *.PDF)</span><i class="chev s"></i></div></div>
    <div class="acts"><i class="chev h"></i><span>Masquer les dossiers</span><div class="dbtn def">Enregistrer</div><div class="dbtn">Annuler</div></div>
    <svg class="resize" width="11" height="12" viewBox="0 0 11 12" fill="#b8b8b8"><path d="M8 0h3v3H8zM4 4.500h3v3H4zM8 4.500h3v3H8zM0 9h3v3H0zM4 9h3v3H4zM8 9h3v3H8z"/></svg>
  </div>
</div>
<script src="rulers.js"></script>
</body>
</html>
```
FILE: styles.css
```css
* { box-sizing: border-box; }
html, body { height: 100%; }
body { margin: 0; display: flex; flex-direction: column; position: relative; overflow: hidden; background: #efefef; color: #000; font: 12.65px/16px "DejaVu Sans Condensed", "DejaVu Sans", sans-serif; font-stretch: condensed; white-space: nowrap; }
.defs { position: absolute; }
svg { display: block; flex: none; }
svg text { font-family: "DejaVu Sans Condensed", "DejaVu Sans", sans-serif; }
svg text.serif { font-family: "Liberation Serif", serif; }
label, span, legend { flex: none; }

.titlebar { height: 30px; flex: none; background: #fff; display: flex; align-items: center; padding: 0 23px 1px 4px; gap: 5px; color: #999; font: 14.2px/20px "Open Sans", "Noto Sans", sans-serif; }
.winctl { margin-left: auto; }
.menubar { height: 25px; flex: none; display: flex; align-items: center; gap: 15px; padding: 1px 0 0 10px; border-bottom: 1px solid #b4b4b4; }
.toolbar { height: 39px; flex: none; display: flex; align-items: center; border-bottom: 2px solid #bababa; border-top: 1px solid #fafafa; }
.toolbar > svg { width: 35px; height: 24px; position: relative; left: -.5px; }
.toolbar .flip { transform: scaleX(-1); }
.toolbar .gray { filter: grayscale(1) opacity(.6); }
.sep { width: 3px; height: 30px; border-left: 1px solid #b4b4b4; border-right: 1px solid #fff; flex: none; }
.grip { width: 14.200px; height: 30px; flex: none; background: radial-gradient(circle at 1px 1px, #c2c2c2 1px, transparent 1.200px) 6px 0/10px 5px content-box, radial-gradient(circle at 1px 1px, #c2c2c2 1px, transparent 1.200px) 3px 2px/10px 5px content-box; padding: 0 4px 0 5px; }
.grip.first { width: 11.500px; padding: 0 1px 0 5px; }

.field { display: flex; align-items: stretch; height: 22px; flex: none; border: 1px solid #adadad; border-radius: 2px; background: #fff; overflow: hidden; }
.field > span { flex: 1; align-self: center; padding-left: 4px; }
.field.spin { height: 29px; }
.field.spin > span { padding-top: 2px; }
.field.off { border-color: #919191; color: #868686; background: #efefef; }
.field.btn { background: linear-gradient(#fdfdfd, #dcdcdc); }
.dd, .ud { width: 16px; border-left: 1px solid #adadad; background: linear-gradient(#fff, #dcdcdc); position: relative; flex: none; }
.off .dd, .off .ud { border-color: #919191; background: linear-gradient(#fafafa, #dedede); }
.dd::after { content: ""; position: absolute; left: 4px; top: calc(50% - 2px); border: 4px solid transparent; border-top: 4px solid #000; border-bottom: 0; }
.off .dd::after { border-top-color: #6c6c6c; }
.ud { background: linear-gradient(#fff, #e2e2e2 13px, #adadad 13px, #adadad 14px, #fff 14px, #dcdcdc); }
.off .ud { background: linear-gradient(#fafafa, #e2e2e2 13px, #919191 13px, #919191 14px, #fafafa 14px, #dcdcdc); }
.ud::before, .ud::after { content: ""; position: absolute; left: 4px; border: 4px solid transparent; }
.ud::before { top: 4px; border-bottom-color: #000; border-top: 0; }
.ud::after { bottom: 4px; border-top-color: #000; border-bottom: 0; }
.off .ud::before { border-bottom-color: #6c6c6c; }
.off .ud::after { border-top-color: #6c6c6c; }
.atlasnum { width: 78px; height: 30px; border-radius: 3px; }

main { flex: 1; display: flex; min-height: 0; }
.tools { width: 39px; flex: none; border-right: 1px solid #b4b4b4; border-left: 1px solid #f8f8f8; display: flex; flex-direction: column; align-items: center; padding-top: 6px; }
.tools > svg { width: 24px; height: 24px; margin: 5px 0; }
.tools .dots { width: 30px; flex: none; }
.tools .on { width: 34px; height: 33px; border: 1px solid #8e8e8e; border-radius: 3px; background: #d6d6d6; display: flex; align-items: center; justify-content: center; }
.on svg { width: 26px; height: 26px; }
.tools hr { width: 31px; height: 2px; border: 0; border-top: 1px solid #b4b4b4; border-bottom: 1px solid #fff; margin: 2px 0 0; flex: none; }
.dots { height: 6px; background: radial-gradient(circle at 1px 1px, #c2c2c2 1px, transparent 1.200px) 0 0/6px 6px, radial-gradient(circle at 1px 1px, #c2c2c2 1px, transparent 1.200px) 3px 3px/6px 6px; }

.composer { margin: 1px 0 1px 2px; width: 1454px; flex: none; border: 1px solid #b4b4b4; border-radius: 3px; display: grid; grid-template: 19px 1fr / 19px 1fr; overflow: hidden; }
.ruler-h { grid-column: 1 / 3; width: 1452px; height: 19px; }
.ruler-v { width: 19px; height: 886px; }
.canvas { width: 1433px; height: 886px; background: #d7d7d7; }
.map path { vector-effect: non-scaling-stroke; }
.map circle { vector-effect: non-scaling-stroke; }
.scale-txt { fill: #000; text-anchor: middle; }
svg .scale-txt text { font-family: "Open Sans", sans-serif; font-size: 14.100px; font-stretch: normal; }
.vsplit { width: 6px; flex: none; margin: 303px 0 307px; background: radial-gradient(circle at 1px 1px, #c2c2c2 1px, transparent 1.200px) 1px 0/5px 5px; }

.docks { flex: 1; display: flex; flex-direction: column; padding: 0 1px 1px 0; min-width: 0; }
.tabs { display: flex; align-items: flex-end; height: 23px; flex: none; }
.tabs.bottom { height: 24px; }
.tabs span { height: 20px; border: 1px solid #adadad; border-radius: 2px 2px 0 0; background: linear-gradient(#fafafa, #dadada); display: flex; align-items: center; justify-content: center; padding-top: 1px; }
.tabs .act { height: 23px; background: #efefef; border-bottom: 0; padding-top: 1px; }
.tabs i { flex: 1; border-bottom: 1px solid #b4b4b4; }
.tabs .t1 { width: 83px; margin-left: 1px; }
.tabs .t2 { width: 181px; }
.tabs .t3 { width: 100px; }
.tabs .t4 { width: 146px; }
.tabs .t5 { width: 132px; border-left: 0; }
.dockhead { display: flex; align-items: center; height: 24px; padding: 0 1px 0 4px; flex: none; }
.dockhead .dots { flex: 1; }
.dockhead span { padding: 1px 7px 0 12px; }
.dockhead .dots:first-child { margin-right: 2px; }
.dockhead .x { width: 14px; height: 15px; margin-left: 4px; border: 1px solid #555; border-radius: 3px; background: linear-gradient(45deg, transparent 44%, #000 44% 56%, transparent 56%) center/8px 8px no-repeat, linear-gradient(-45deg, transparent 44%, #000 44% 56%, transparent 56%) center/8px 8px no-repeat, #f8f8f8; position: relative; top: -1px; }
.history { list-style: none; margin: 0; padding: 1px 1px 0; height: 174px; border: 1px solid #b4b4b4; border-radius: 2px; background: #fff; flex: none; }
.history li { height: 16px; padding-left: 3px; line-height: 16px; }
.history .cur { background: #efefef; }
.hsplit { width: 134px; height: 6px; margin: 0 auto 0 140px; flex: none; background: radial-gradient(circle at 1px 1px, #c2c2c2 1px, transparent 1.200px) 0 2px/5px 5px; }
.dockhead.second { height: 23px; }
.scroller { flex: 1; min-height: 0; border: 1px solid #b4b4b4; border-radius: 2px; display: flex; overflow: hidden; }
.props { width: 401px; flex: none; padding: 11px 12px 0 12px; overflow: hidden; }
fieldset { margin: 0 0 6px; padding: 0 11px 0 12px; border: 1px solid #b4b4b4; border-radius: 2px; min-width: 0; width: 377px; }
.g1 { height: 199px; } .g2 { height: 175px; } .g3 { height: 108px; } .g4 { height: 140px; }
legend { height: 18px; margin-left: -13px; padding: 2px 7px 0 22px; font-weight: bold; color: #3c3c3c; background: #efefef; position: relative; }
legend::before { content: ""; position: absolute; left: 3px; top: 7px; border: 5.500px solid transparent; border-top: 7px solid #3c3c3c; border-bottom: 0; }
.row { display: flex; align-items: center; }
.row label { width: 84px; }
.g1 .row:nth-of-type(1) { margin-top: 14px; }
.g2 .row:nth-of-type(1), .g3 .row:nth-of-type(1), .g4 .row:nth-of-type(1) { margin-top: 11px; }
.row.in { padding-left: 57px; }
.row.mt6 { margin-top: 6px; } .row.mt8 { margin-top: 8px; } .row.mt9 { margin-top: 9px; }
.w231 { width: 231px; } .w267 { width: 267px; } .w103 { width: 103px; } .w136 { width: 136px; } .w172 { width: 172px; }
.row label.w135 { width: 135px; } .row label.w70 { width: 70px; } .row label.w75 { width: 75px; padding-left: 6px; } .row label.w179 { width: 179px; } .row label.w157 { width: 157px; }
.prop { width: 23px; height: 18px; margin-left: 9px; }
.push { border: 1px solid #adadad; border-radius: 2px; background: linear-gradient(#fafafa, #dadada); display: flex; align-items: center; justify-content: center; }
.redef { width: 238px; height: 28px; }
.modif { width: 172px; height: 31px; gap: 4px; }
.modif i { width: 20px; height: 20px; background: #fff; }
.chk { width: 16px; height: 16px; border: 1px solid #b4b4b4; background: #fafafa; margin-right: 6px; flex: none; }
.sbar { width: 15px; display: flex; flex-direction: column; padding: 1px 0 0; margin-left: -1px; }
.sbar b { height: 15px; border: 1px solid #808080; border-radius: 3px; background: linear-gradient(#fff, #e2e2e2); position: relative; flex: none; margin-bottom: 1px; }
.sbar b::after { content: ""; position: absolute; left: 3px; top: 5px; border: 3.500px solid transparent; }
.sbar .up::after { border-bottom: 4px solid #000; border-top: 0; }
.sbar .down::after { border-top: 4px solid #000; border-bottom: 0; }
.thumb { height: 369px; border: 1px solid #808080; border-radius: 2px; background: linear-gradient(90deg, #fff, #d9d9d9); flex: none; position: relative; }
.thumb::after { content: ""; position: absolute; left: 1px; top: 175px; width: 11px; height: 19px; background: radial-gradient(circle at 1px 1px, #aaa .8px, transparent 1px) 0 0/4px 4px; }
.track { flex: 1; background: #e9e9e9; border: 1px dotted #ccc; border-width: 0 1px; }

.status { height: 26px; flex: none; display: flex; align-items: center; padding: 1px 0 0 2px; }
.sx { width: 106px; } .sy { width: 106px; } .sp { width: 106px; }
.zoom { width: 99px; height: 22px; }

.dialog { position: absolute; left: 400px; top: 177px; width: 944px; height: 592px; border: 1px solid #707070; background: #383838; color: #fff; font: 13.950px/20px "Open Sans", "Noto Sans", sans-serif; display: flex; flex-direction: column; box-shadow: 0 5px 18px rgba(0, 0, 0, .45); }
.dtitle { height: 37px; background: #000; display: flex; align-items: center; padding: 0 14px 0 12px; gap: 4px; flex: none; }
.dtitle span { letter-spacing: .07px; }
.close { margin-left: auto; }
.dnav { height: 44px; background: #191919; display: flex; align-items: center; padding: 0 11px 2px 15px; flex: none; }
.addr { width: 531px; height: 28px; border: 1px solid #535353; display: flex; align-items: center; padding: 0 4px 0 3px; margin-left: 1px; }
.chev { width: 7px; height: 7px; border: solid #8c8c8c; border-width: 1.500px 1.500px 0 0; transform: rotate(45deg); flex: none; }
.addr .chev { margin: 0 12px 0 7px; }
.addr .pc { width: 38px; } .addr .bur { width: 46px; }
.addr .pc + .chev { margin-left: 8px; }
.addr .bur + .chev { margin-left: 9px; }
.addr-end { margin-left: auto; }
.search { width: 253px; height: 28px; margin-left: 12px; border: 1px solid #535353; display: flex; align-items: center; justify-content: space-between; padding: 0 11px 0 9px; color: #767676; font-size: 13.700px; }
.dcmd { height: 38px; background: #202020; display: flex; align-items: center; padding: 0 19px 0 22px; flex: none; }
.tri { border: 4.500px solid transparent; border-top: 5px solid #c8c8c8; border-bottom: 0; margin-left: 5px; flex: none; }
.new { margin-left: 37px; }
.view { margin-left: auto; }
.tri.v { margin: 0 38px 0 13px; }
.help { width: 20px; height: 20px; border-radius: 50%; background: #0a6fd6; text-align: center; font-weight: bold; }
.dbody { height: 319px; flex: none; display: flex; border-top: 1px solid #151515; background: #202020; }
.tree { width: 174px; background: #191919; overflow: hidden; padding: 1px 0 0 1px; flex: none; }
.tree > div { height: 30px; padding-left: 40px; display: flex; align-items: center; }
.tree .sel { height: 28px; margin-bottom: 1px; background: #333; }
.tree svg { width: 18px; margin-right: 6px; }
.tree .dl { letter-spacing: -.1px; }
.tree .low { margin-top: 5px; }
.tree .root { margin-top: 10px; padding-left: 30px; }
.tree .peek { width: 11px; height: 10px; padding: 0; margin: 6px 0 0 42px; background: #f3cf73; }
.tscroll { width: 22px; background: #171717; display: flex; flex-direction: column; align-items: center; padding: 9px 0 11px; flex: none; }
.chev.u { transform: rotate(-45deg); margin-top: 1px; }
.chev.d { transform: rotate(135deg); margin-top: auto; }
.tthumb { width: 19px; height: 80px; background: #4d4d4d; margin-top: 68px; flex: none; }
.files { flex: 1; border-left: 1px solid #2d2d2d; display: flex; padding: 23px 0 0 14px; }
figure { margin: 0; width: 144px; display: flex; flex-direction: column; align-items: center; position: relative; }
figure > svg:first-child { margin-left: -3px; }
figcaption { line-height: 20px; padding-left: 1px; }
.link { position: absolute; left: 12px; top: 85px; }
.dfoot { flex: 1; position: relative; padding: 13px 6px 0 0; }
.line { display: flex; align-items: center; height: 28px; margin-bottom: 3px; }
.line label { width: 151px; text-align: right; margin-right: 6px; }
.inp { flex: 1; height: 28px; border: 1px solid #9b9b9b; background: #333; display: flex; align-items: center; padding: 0 6px 0 3px; }
.inp.focus { border-color: #fff; background: #383838; }
.caret { width: 1px; height: 20px; background: #fff; margin-left: 3px; margin-bottom: 3px; }
.chev.s { transform: rotate(135deg); margin: -4px 0 0 auto; border-width: 1px 1px 0 0; border-color: #ccc; }
.acts { display: flex; align-items: center; margin-top: 32px; padding: 0 14px; }
.chev.h { transform: rotate(-45deg); width: 8px; height: 8px; margin: 12px 11px 0 1px; border-color: #ddd; border-width: 2px 2px 0 0; }
.acts > span { margin-top: 8px; }
.dbtn { width: 110px; height: 33px; margin-left: 15px; border: 2px solid #c4c4c4; background: #333; display: flex; align-items: center; justify-content: center; }
.dbtn.def { width: 119px; border-color: #fff; margin-left: auto; }
.resize { position: absolute; right: 3px; bottom: 3px; }
```
FILE: rulers.js
```js
// Builds the millimetre rulers and the scattered lake specks of the map.
const NS = 'http://www.w3.org/2000/svg';
const STEP = 3.6178;
const add = (parent, name, attrs, text) => {
  const el = document.createElementNS(NS, name);
  for (const k in attrs) el.setAttribute(k, attrs[k]);
  if (text !== undefined) el.textContent = text;
  parent.appendChild(el);
};

const h = document.getElementById('rulerH');
let d = '';
for (let mm = -48; mm <= 346; mm += 2) {
  const x = Math.floor(239.3 + mm * STEP) + 0.5;
  const len = mm % 20 === 0 ? 19 : mm % 10 === 0 ? 7 : 4;
  d += `M${x} 115v-${len}`;
  if (mm % 20 === 0) add(h, 'text', { x: x + 0.5, y: 107, 'font-size': 12 }, mm);
}
add(h, 'path', { d, stroke: '#000' });
add(h, 'path', { d: 'M492.500 96v19', stroke: '#f00' });

const v = document.getElementById('rulerV');
d = '';
for (let mm = -16; mm <= 226; mm += 2) {
  const y = Math.floor(177.3 + mm * STEP) + 0.5;
  const len = mm % 20 === 0 ? 19 : mm % 10 === 0 ? 7 : 4;
  d += `M61 ${y}h-${len}`;
  if (mm % 20 === 0) {
    add(v, 'text', { transform: `translate(53.5 ${y + 0.5}) rotate(-90)`, 'text-anchor': 'end', 'font-size': 12 }, mm);
  }
}
add(v, 'path', { d, stroke: '#000' });
add(v, 'path', { d: 'M42 116.500h19', stroke: '#f00' });

let seed = 7;
const rnd = () => (seed = (seed * 16807) % 2147483647) / 2147483647;
const specks = document.getElementById('specks');
let s = 'M287 423h1.500v1.500h-1.500z';
const scatter = (n, x, y, w, hh, size) => {
  for (let i = 0; i < n; i++) {
    const a = x + rnd() * w, b = y + rnd() * hh, k = size * (0.5 + rnd());
    s += `M${a.toFixed(1)} ${b.toFixed(1)}h${k.toFixed(1)}v1h-${k.toFixed(1)}z`;
  }
};
scatter(4, 366, 460, 8, 6, 1.5);
scatter(8, 376, 478, 20, 22, 1.5);
scatter(2, 350, 545, 2, 3, 1);
scatter(3, 366, 575, 2, 4, 1.5);
scatter(1, 384, 564, 1, 1, 1);
scatter(8, 286, 624, 12, 6, 1.5);
scatter(14, 310, 615, 16, 26, 1.8);
scatter(14, 334, 636, 10, 6, 2);
scatter(14, 355, 654, 13, 7, 2);
scatter(40, 377, 630, 20, 42, 1.5);
scatter(60, 385, 645, 14, 40, 2);
scatter(60, 387, 665, 9, 26, 3);
scatter(30, 392, 685, 8, 17, 3);
scatter(6, 376, 708, 14, 20, 1.5);
add(specks, 'path', { d: s });
```
